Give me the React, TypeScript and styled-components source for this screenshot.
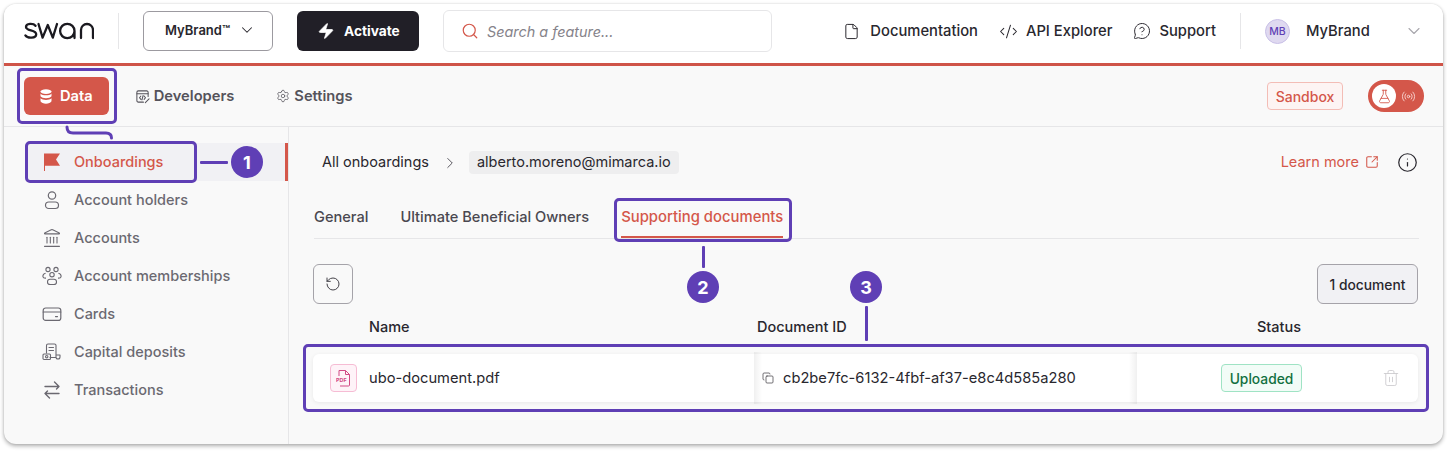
import React from "react";
import styled, { createGlobalStyle } from "styled-components";
import {
  ChevronDown, ChevronRight, CodeXml, Copy, File, FlaskConical, Info,
  Landmark, MessageCircleQuestion, Radio, RotateCcw, Search, Settings,
  SquareArrowOutUpRight, Trash2, Zap,
} from "lucide-react";

const purple = "#5f3fb5";
const red = "#d4574a";

const Global = createGlobalStyle`
  html, body { margin: 0; padding: 0; background: #fff; }
  body { font-family: Inter, "Liberation Sans", sans-serif; -webkit-font-smoothing: antialiased; }
  * { box-sizing: border-box; }
`;

const Page = styled.div`
  position: relative;
  width: 1447px;
  height: 452px;
  padding: 4px 4px 0;
  overflow: hidden;
`;
const Frame = styled.div`
  width: 1439px;
  height: 440px;
  display: flex;
  flex-direction: column;
  background: #f9f9f9;
  border-radius: 12px;
  overflow: hidden;
  box-shadow: 0 2px 4px rgba(0, 0, 0, 0.32), 0 0 2px rgba(0, 0, 0, 0.12);
`;
const Header = styled.header`
  height: 62px;
  flex: none;
  display: flex;
  align-items: center;
  gap: 24px;
  padding: 0 22px 5px 20px;
  background: #fff;
  border-bottom: 3px solid #cf5448;
`;
const LogoMark = styled.svg`
  width: 70px;
  height: 18px;
  flex: none;
`;
const Divider = styled.div`
  width: 1px;
  height: 36px;
  background: #e6e6e8;
  flex: none;
`;
const BrandButton = styled.div`
  width: 130px;
  height: 40px;
  display: flex;
  align-items: center;
  gap: 8px;
  padding: 0 0 2px 21px;
  border: 1px solid #9c9aa0;
  border-radius: 6px;
  background: #fff;
  font-size: 13px;
  font-weight: 600;
  color: #29272e;
  flex: none;
`;
const ActivateButton = styled.div`
  width: 122px;
  height: 40px;
  display: flex;
  align-items: center;
  gap: 9px;
  padding-left: 20px;
  border-radius: 6px;
  background: #211f27;
  font-size: 13.7px;
  font-weight: 700;
  color: #fff;
  flex: none;
`;
const SearchBox = styled.div`
  width: 329px;
  height: 42px;
  display: flex;
  align-items: center;
  gap: 8px;
  padding-left: 17px;
  border: 1px solid #e6e6e8;
  border-radius: 6px;
  font-size: 14.4px;
  font-style: italic;
  color: #85838a;
  flex: none;
`;
const HeaderLinks = styled.nav`
  margin-left: auto;
  display: flex;
  align-items: center;
  gap: 21px;
`;
const HeaderLink = styled.span<{ $gap: number }>`
  display: flex;
  align-items: center;
  gap: ${(p) => p.$gap}px;
  font-size: 14.75px;
  font-weight: 500;
  color: #29272e;
  white-space: nowrap;
`;
const UserMenu = styled.div`
  width: 156px;
  display: flex;
  align-items: center;
  gap: 16px;
  font-size: 14.75px;
  font-weight: 500;
  color: #29272e;
  flex: none;
`;
const Avatar = styled.span`
  width: 25px;
  height: 25px;
  display: flex;
  align-items: center;
  justify-content: center;
  border-radius: 50%;
  background: #dfd9f0;
  border: 1px solid #c8bfe6;
  color: ${purple};
  font-size: 10.5px;
  font-weight: 500;
`;
const EndChevron = styled.span`
  margin: 0 -3px 0 auto;
  display: flex;
  color: #a8a6ac;
`;
const SubNav = styled.div`
  height: 61px;
  flex: none;
  display: flex;
  align-items: center;
  gap: 10px;
  padding: 0 19px 0 20px;
  border-bottom: 1px solid #e6e6e8;
`;
const NavTab = styled.div<{ $active?: boolean }>`
  height: 38px;
  display: flex;
  align-items: center;
  gap: ${(p) => (p.$active ? 8 : 4)}px;
  padding: 0 16px;
  border-radius: 6px;
  font-size: 14.7px;
  font-weight: 600;
  background: ${(p) => (p.$active ? red : "transparent")};
  color: ${(p) => (p.$active ? "#fff" : "#55535b")};
`;
const SandboxBadge = styled.div`
  margin-left: auto;
  width: 76px;
  height: 28px;
  display: flex;
  align-items: center;
  justify-content: center;
  border: 1px solid #f3bdb6;
  border-radius: 4px;
  background: #fdf4f3;
  color: ${red};
  font-size: 14px;
  font-weight: 500;
`;
const ModeToggle = styled.div`
  margin-left: 15px;
  width: 56px;
  height: 32px;
  display: flex;
  align-items: center;
  padding-left: 4px;
  gap: 5px;
  border-radius: 16px;
  background: ${red};
  color: #fbe3e0;
`;
const ToggleKnob = styled.span`
  width: 24px;
  height: 24px;
  display: flex;
  align-items: center;
  justify-content: center;
  border-radius: 50%;
  background: #fff;
  color: ${red};
`;
const Body = styled.div`
  flex: 1;
  display: flex;
  min-height: 0;
`;
const Sidebar = styled.aside`
  width: 285px;
  flex: none;
  padding-top: 16px;
  border-right: 1px solid #e6e6e8;
`;
const SideItem = styled.div<{ $active?: boolean }>`
  height: 38px;
  margin-left: 22px;
  display: flex;
  align-items: center;
  gap: 12px;
  padding: 0 0 1px 16px;
  font-size: 14.5px;
  font-weight: 500;
  color: ${(p) => (p.$active ? red : "#6b6971")};
  background: ${(p) => (p.$active ? "#f1f1f4" : "transparent")};
  border-right: 3px solid ${(p) => (p.$active ? red : "transparent")};
`;
const SideIcon = styled.svg`
  width: 20px;
  height: 20px;
  flex: none;
`;
const Main = styled.main`
  flex: 1;
  min-width: 0;
  padding: 24px 24px 0 25px;
`;
const TopRow = styled.div`
  height: 23px;
  display: flex;
  align-items: center;
  padding-left: 8px;
  font-size: 14.5px;
  color: #29272e;
`;
const Crumb = styled.span`
  padding-bottom: 2px;
  white-space: nowrap;
`;
const CrumbArrow = styled.span`
  display: flex;
  margin: 0 10px 0 12px;
  color: #55535b;
`;
const CrumbChip = styled.span`
  height: 23px;
  display: flex;
  align-items: center;
  padding: 0 8px 2px;
  border-radius: 4px;
  background: #eeeeef;
  white-space: nowrap;
`;
const LearnMore = styled.span`
  margin-left: auto;
  display: flex;
  align-items: center;
  gap: 6px;
  padding-bottom: 2px;
  color: ${red};
  font-size: 14.5px;
`;
const InfoMark = styled.span`
  display: flex;
  margin-left: 18px;
  margin-right: 1px;
  color: #29272e;
`;
const TabBar = styled.div`
  margin-top: 24px;
  height: 41px;
  display: flex;
  gap: 32px;
  border-bottom: 1px solid #e6e6e8;
`;
const Tab = styled.div<{ $active?: boolean }>`
  height: 40px;
  line-height: 38px;
  border-bottom: 2px solid ${(p) => (p.$active ? red : "transparent")};
  font-size: ${(p) => (p.$active ? 14.85 : 14.6)}px;
  font-weight: 500;
  color: ${(p) => (p.$active ? red : "#4a4850")};
  white-space: nowrap;
`;
const Toolbar = styled.div`
  margin: 25px 1px 0 -1px;
  height: 40px;
  display: flex;
  justify-content: space-between;
`;
const IconButton = styled.div`
  width: 40px;
  height: 40px;
  display: flex;
  align-items: center;
  justify-content: center;
  border: 1px solid #a5a3a9;
  border-radius: 6px;
  color: #45434a;
`;
const CountButton = styled.div`
  width: 101px;
  height: 40px;
  display: flex;
  align-items: center;
  justify-content: center;
  padding-top: 2px;
  border: 1px solid #a5a3a9;
  border-radius: 6px;
  background: #f1f1f4;
  color: #29272e;
  font-size: 13.8px;
  font-weight: 500;
`;
const Columns = styled.div`
  margin: 0 1px 0 -1px;
  display: grid;
  grid-template-columns: 441px 383px 281px;
`;
const HeadRow = styled(Columns)`
  height: 50px;
  padding-top: 14px;
`;
const HeadCell = styled.div<{ $indent: number }>`
  padding-left: ${(p) => p.$indent}px;
  line-height: 18px;
  font-size: 14.5px;
  font-weight: 500;
  color: #29272e;
`;
const Row = styled(Columns)`
  height: 48px;
  background: #fff;
  border-radius: 6px;
  box-shadow: 0 1px 4px rgba(0, 0, 0, 0.07);
`;
const Cell = styled.div`
  position: relative;
  display: flex;
  align-items: center;
  font-size: 14.7px;
  color: #29272e;
  white-space: nowrap;
`;
const NameCell = styled(Cell)`
  padding: 0 0 0 17px;
  gap: 12px;
`;
const CellText = styled.span`
  padding-bottom: 1px;
`;
const PdfTile = styled.span`
  width: 27px;
  height: 28px;
  display: flex;
  align-items: center;
  justify-content: center;
  border: 1px solid #f6bcd4;
  border-radius: 4px;
  background: #fef3f8;
  color: #d14a85;
`;
const IdCell = styled(Cell)`
  padding-left: 8px;
  gap: 9px;
  &::before,
  &::after {
    content: "";
    position: absolute;
    top: -2px;
    bottom: -2px;
    width: 8px;
  }
  &::before {
    left: 0;
    background: linear-gradient(90deg, rgba(0, 0, 0, 0.06), transparent);
  }
  &::after {
    right: 0;
    background: linear-gradient(270deg, rgba(0, 0, 0, 0.06), transparent);
  }
`;
const StatusCell = styled(Cell)`
  padding: 0 18px 0 84px;
`;
const StatusBadge = styled.span`
  width: 81px;
  height: 28px;
  display: flex;
  align-items: center;
  justify-content: center;
  padding-top: 1px;
  border: 1px solid #9fe3c4;
  border-radius: 4px;
  background: #f2fcf7;
  color: #12703f;
  font-size: 13.8px;
  font-weight: 500;
`;
const TrashAction = styled.span`
  margin-left: auto;
  display: flex;
  color: #c9c8cc;
`;
const Outline = styled.div<{ $x: number; $y: number; $w: number; $h: number }>`
  position: absolute;
  left: ${(p) => p.$x}px;
  top: ${(p) => p.$y}px;
  width: ${(p) => p.$w}px;
  height: ${(p) => p.$h}px;
  border: 3px solid ${purple};
  border-radius: 5px;
  pointer-events: none;
`;
const Marker = styled.div<{ $x: number; $y: number }>`
  position: absolute;
  left: ${(p) => p.$x}px;
  top: ${(p) => p.$y}px;
  width: 32px;
  height: 32px;
  display: flex;
  align-items: center;
  justify-content: center;
  border-radius: 50%;
  background: ${purple};
  color: #fff;
  font-size: 18px;
  font-weight: 700;
`;
const Lead = styled.div<{ $x: number; $y: number; $w: number; $h: number }>`
  position: absolute;
  left: ${(p) => p.$x}px;
  top: ${(p) => p.$y}px;
  width: ${(p) => p.$w}px;
  height: ${(p) => p.$h}px;
  background: ${purple};
  border-radius: 1px;
`;
const Connector = styled.svg`
  position: absolute;
  left: 60px;
  top: 124px;
  width: 60px;
  height: 18px;
`;

const Swan = () => (
  <LogoMark viewBox="0 0 70 18" fill="none" stroke="#1b1a20" strokeWidth="2.3" strokeLinecap="round" strokeLinejoin="round">
    <path d="M11.5 3.8C9.5 1.2 2 1 2 5C2 9.3 12.2 7.4 12.2 12.2C12.2 16.6 3.4 16.6 1.4 13.4" />
    <path d="M14.5 2L18.6 15.6L23.8 3L28.8 15.6L33 2" />
    <path d="M50.5 9A7.2 7.2 0 1 1 36.1 9A7.2 7.2 0 1 1 50.5 9V16" />
    <path d="M57 16V8A6 6 0 0 1 69 8V16" />
  </LogoMark>
);

const DataIcon = () => (
  <svg width="12" height="15" viewBox="0 0 12 15" fill="#fff">
    <ellipse cx="6" cy="2.6" rx="5.5" ry="2.4" />
    <path d="M.5 4.4C1.6 5.8 3.7 6.3 6 6.3S10.4 5.8 11.5 4.4V7.3C10.7 8.6 8.5 9.3 6 9.3S1.3 8.6.5 7.3z" />
    <path d="M.5 9.3C1.6 10.5 3.7 11 6 11s4.4-.5 5.500-1.700v3C10.700 13.900 8.500 14.700 6 14.700S1.300 13.900.5 12.300z" />
  </svg>
);

const DevIcon = () => (
  <svg width="15" height="15" viewBox="0 0 16 16" fill="none" stroke="#55535b" strokeWidth="1.1" strokeLinecap="round" strokeLinejoin="round">
    <path d="M14 8V3.5A1.5 1.5 0 0 0 12.5 2h-9A1.5 1.5 0 0 0 2 3.5v9A1.5 1.5 0 0 0 3.5 14H9" />
    <path d="M2 5h12M6.3 7.5 4.8 9.3l1.5 1.8M9.7 7.5l1.5 1.8-1.5 1.8M8.6 7 7.4 11.6" />
    <path d="m11 14.5 4-4" />
  </svg>
);

const Flag = () => (
  <SideIcon viewBox="0 0 20 20">
    <path d="M2 1.5h16l-4 6 4 6.2H3V19H2z" fill={red} />
  </SideIcon>
);
const PersonIcon = () => (
  <SideIcon viewBox="0 0 20 20" fill="none" stroke="#6b6971" strokeWidth="1.2">
    <circle cx="10" cy="5.5" r="3.7" />
    <rect x="3.5" y="12" width="13" height="6.5" rx="3.25" />
  </SideIcon>
);
const GroupIcon = () => (
  <SideIcon viewBox="0 0 20 20" fill="none" stroke="#6b6971" strokeWidth="1.1">
    <circle cx="6" cy="3.5" r="2.1" />
    <circle cx="14" cy="3.5" r="2.1" />
    <circle cx="10" cy="8.7" r="2.2" />
    <path d="M3.6 7.2C1.6 7.7.7 9.3 1 10.8c.2 1 1.5 1.4 3 1.3M16.4 7.2c2 .5 2.9 2.1 2.6 3.6-.2 1-1.5 1.4-3 1.3" />
    <rect x="5.5" y="13.2" width="9" height="5.3" rx="2.6" />
  </SideIcon>
);
const CardIcon = () => (
  <SideIcon viewBox="0 0 20 20" fill="none" stroke="#6b6971" strokeWidth="1.2" strokeLinecap="round">
    <rect x="1.2" y="4" width="17.6" height="12.4" rx="2.5" />
    <path d="M1.2 8h17.6M13.5 12.6h2" />
  </SideIcon>
);
const DepositIcon = () => (
  <SideIcon viewBox="0 0 20 20" fill="none" stroke="#6b6971" strokeWidth="1.1" strokeLinecap="round" strokeLinejoin="round">
    <path d="M4.5 11V3.5A1.5 1.5 0 0 1 6 2h6.5A1.5 1.5 0 0 1 14 3.5V15a2 2 0 0 0 4 0v-2h-4M8 15.5h6" />
    <path d="M7 5.5h4.5M7 8.5h4.5" />
    <rect x="1" y="12" width="7.5" height="5.5" rx="1" />
    <circle cx="4.7" cy="14.7" r="1.2" />
  </SideIcon>
);
const SwapIcon = () => (
  <SideIcon viewBox="0 0 20 20" fill="none" stroke="#6b6971" strokeWidth="1.4" strokeLinecap="round" strokeLinejoin="round">
    <path d="M3 6.5h14M12.5 2 17 6.5 14.5 9M17 13.5H3M7.5 18 3 13.5 5.5 11" />
  </SideIcon>
);
const PdfIcon = () => (
  <svg width="16" height="18" viewBox="0 0 16 18" fill="none" stroke="currentColor" strokeWidth="1" strokeLinejoin="round">
    <path d="M3 7V1.5h6.5L13.5 5.5V16a1 1 0 0 1-1 1H4" />
    <path d="M9.5 1.5v4h4" />
    <text x="0" y="13" fontSize="5.4" fontWeight="700" fill="currentColor" stroke="none" fontFamily="Inter, sans-serif">PDF</text>
  </svg>
);

const sideItems = [
  { label: "Account holders", icon: <PersonIcon /> },
  { label: "Accounts", icon: <Landmark size={20} strokeWidth={1.3} color="#6b6971" /> },
  { label: "Account memberships", icon: <GroupIcon /> },
  { label: "Cards", icon: <CardIcon /> },
  { label: "Capital deposits", icon: <DepositIcon /> },
  { label: "Transactions", icon: <SwapIcon /> },
];

export default function App() {
  return (
    <Page>
      <Global />
      <Frame>
        <Header>
          <Swan />
          <Divider />
          <BrandButton>MyBrand™<ChevronDown size={18} strokeWidth={1.4} /></BrandButton>
          <ActivateButton><Zap size={18} fill="#fff" strokeWidth={1} />Activate</ActivateButton>
          <SearchBox><Search size={18} strokeWidth={1.6} color={red} />Search a feature...</SearchBox>
          <HeaderLinks>
            <HeaderLink $gap={10}><File size={17} strokeWidth={1.4} />Documentation</HeaderLink>
            <HeaderLink $gap={8}><CodeXml size={19} strokeWidth={1.3} />API Explorer</HeaderLink>
            <HeaderLink $gap={8}><MessageCircleQuestion size={18} strokeWidth={1.3} />Support</HeaderLink>
          </HeaderLinks>
          <Divider />
          <UserMenu>
            <Avatar>MB</Avatar>
            MyBrand
            <EndChevron><ChevronDown size={20} strokeWidth={1.3} /></EndChevron>
          </UserMenu>
        </Header>
        <SubNav>
          <NavTab $active><DataIcon />Data</NavTab>
          <NavTab><DevIcon />Developers</NavTab>
          <NavTab><Settings size={14} strokeWidth={1.3} />Settings</NavTab>
          <SandboxBadge>Sandbox</SandboxBadge>
          <ModeToggle>
            <ToggleKnob><FlaskConical size={15} strokeWidth={1.4} /></ToggleKnob>
            <Radio size={15} strokeWidth={1.3} />
          </ModeToggle>
        </SubNav>
        <Body>
          <Sidebar>
            <SideItem $active><Flag />Onboardings</SideItem>
            {sideItems.map((item) => (
              <SideItem key={item.label}>{item.icon}{item.label}</SideItem>
            ))}
          </Sidebar>
          <Main>
            <TopRow>
              <Crumb>All onboardings</Crumb>
              <CrumbArrow><ChevronRight size={18} strokeWidth={1.3} /></CrumbArrow>
              <CrumbChip>alberto.moreno@mimarca.io</CrumbChip>
              <LearnMore>Learn more<SquareArrowOutUpRight size={14} strokeWidth={1.8} /></LearnMore>
              <InfoMark><Info size={21} strokeWidth={1.4} /></InfoMark>
            </TopRow>
            <TabBar>
              <Tab>General</Tab>
              <Tab>Ultimate Beneficial Owners</Tab>
              <Tab $active>Supporting documents</Tab>
            </TabBar>
            <Toolbar>
              <IconButton><RotateCcw size={16} strokeWidth={1.5} /></IconButton>
              <CountButton>1 document</CountButton>
            </Toolbar>
            <HeadRow>
              <HeadCell $indent={56}>Name</HeadCell>
              <HeadCell $indent={3}>Document ID</HeadCell>
              <HeadCell $indent={120}>Status</HeadCell>
            </HeadRow>
            <Row>
              <NameCell><PdfTile><PdfIcon /></PdfTile><CellText>ubo-document.pdf</CellText></NameCell>
              <IdCell><Copy size={12} strokeWidth={1.5} color="#45434a" /><CellText>cb2be7fc-6132-4fbf-af37-e8c4d585a280</CellText></IdCell>
              <StatusCell>
                <StatusBadge>Uploaded</StatusBadge>
                <TrashAction><Trash2 size={18} strokeWidth={1.1} /></TrashAction>
              </StatusCell>
            </Row>
          </Main>
        </Body>
      </Frame>

      <Outline $x={17} $y={68} $w={100} $h={56} />
      <Connector viewBox="60 124 60 18" fill="none" stroke={purple} strokeWidth="3" strokeLinecap="round">
        <path d="M67 127q0 6 6 6h33q5.500 0 5.500 5" />
      </Connector>
      <Outline $x={25} $y={141} $w={172} $h={42} />
      <Lead $x={200} $y={161} $w={28} $h={3} />
      <Marker $x={231} $y={146}>1</Marker>
      <Outline $x={614} $y={198} $w={178} $h={44} />
      <Lead $x={702} $y={246} $w={3} $h={22} />
      <Marker $x={687} $y={271}>2</Marker>
      <Lead $x={865} $y={306} $w={3} $h={35} />
      <Marker $x={850} $y={271}>3</Marker>
      <Outline $x={303} $y={344} $w={1126} $h={68} />
    </Page>
  );
}
